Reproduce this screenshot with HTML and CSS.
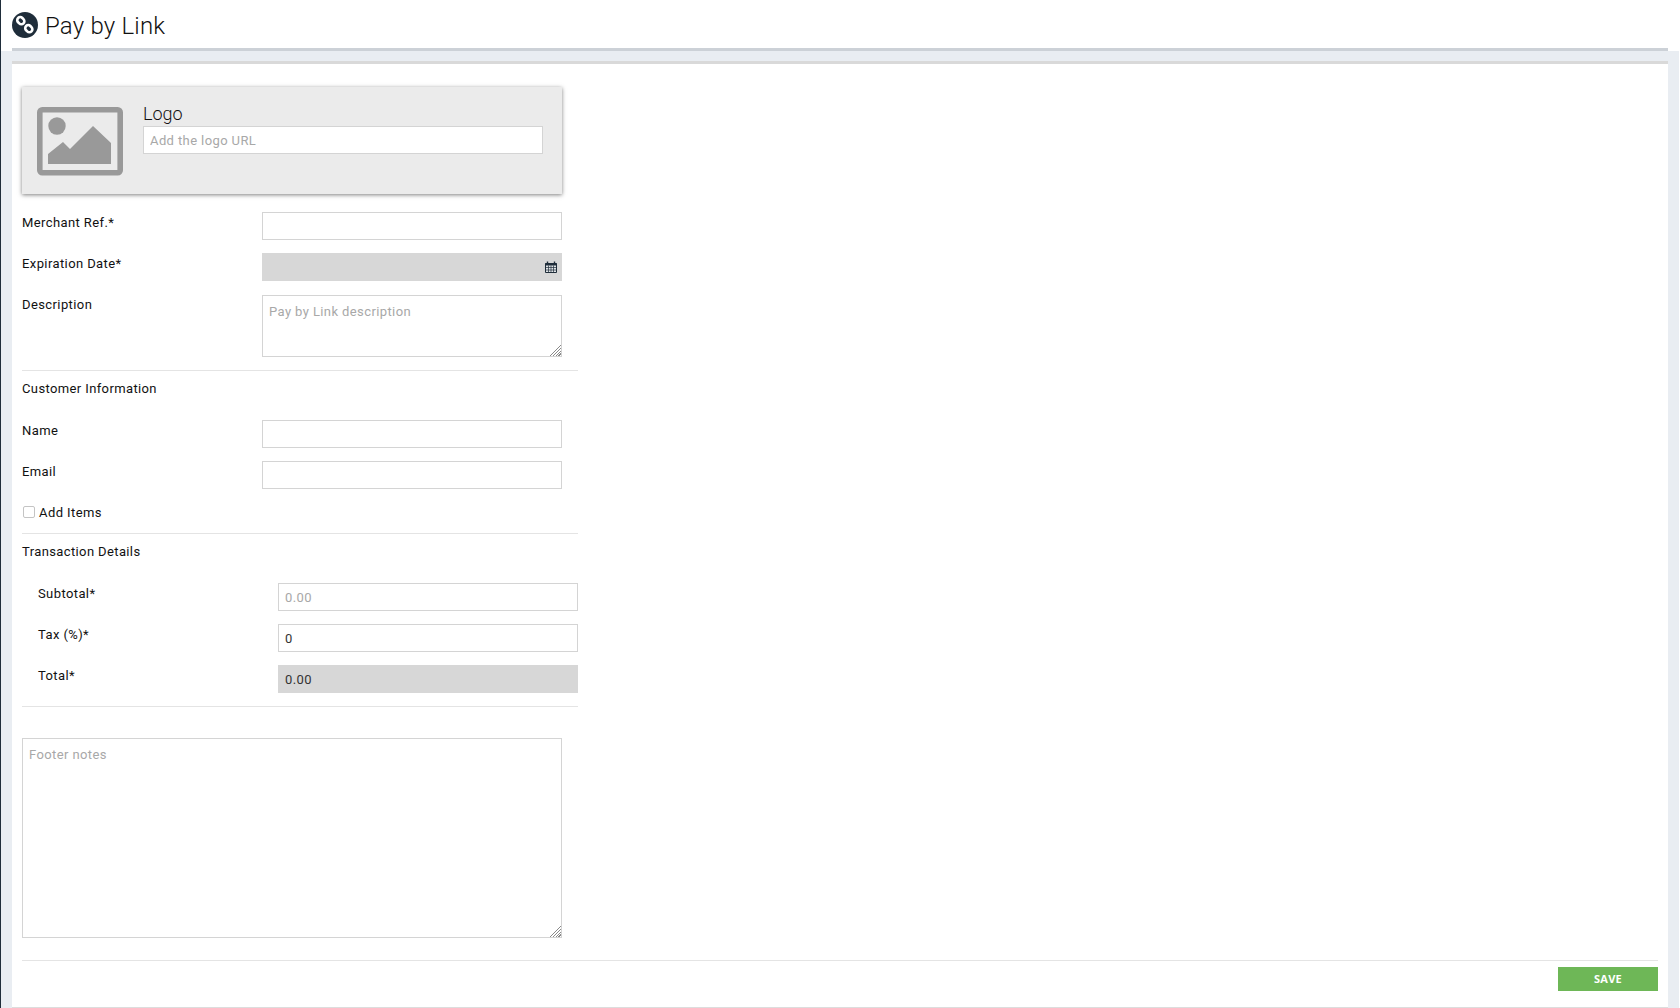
FILE: index.html
```html
<!DOCTYPE html>
<html lang="en">
<head>
<meta charset="utf-8">
<title>Pay by Link</title>
<link rel="stylesheet" href="styles.css">
</head>
<body>
<div class="app">
  <header class="page-header">
    <div class="title-row">
      <svg class="title-icon" viewBox="0 0 26 26" width="26" height="26" aria-hidden="true">
        <circle cx="13" cy="13" r="13" fill="#1f2d3a"/>
        <g fill="none" stroke="#fff" stroke-width="2.600">
          <rect x="5" y="5.700" width="7.600" height="6" rx="3" transform="rotate(45 8.800 8.700)"/>
          <rect x="13" y="13.700" width="7.600" height="6" rx="3" transform="rotate(45 16.800 16.700)"/>
        </g>
      </svg>
      <h1 class="title">Pay by Link</h1>
    </div>
  </header>
  <main class="panel">
    <section class="logo-card">
      <svg class="logo-icon" viewBox="0 0 86 69" width="86" height="69" aria-hidden="true">
        <rect x="2.800" y="2.800" width="80.400" height="63" rx="2.500" fill="none" stroke="#999" stroke-width="5.600"/>
        <circle cx="20" cy="19" r="8.700" fill="#999"/>
        <path d="M11 57V47L26 35L33 42L56 19L74 36V57Z" fill="#999"/>
      </svg>
      <div class="logo-fields">
        <div class="logo-title">Logo</div>
        <input class="field logo-input" type="text" placeholder="Add the logo URL">
      </div>
    </section>

    <div class="row"><label class="label">Merchant Ref.*</label><input class="field" type="text"></div>
    <div class="row row-date">
      <label class="label">Expiration Date*</label>
      <div class="date-field">
        <svg class="calendar" viewBox="0 0 12 12" width="12" height="12" aria-hidden="true">
          <path d="M.5 2.500h11v9H.5z" fill="#dfe3e6" stroke="#1f2d3a"/>
          <path d="M.5 2h11v2.500H.5z" fill="#1f2d3a"/>
          <path d="M2.500.5v2.500M9.500.5v2.500" stroke="#1f2d3a" stroke-width="1.400"/>
          <path d="M3.500 4.500v6.500M6 4.500v6.500M8.500 4.500v6.500M1 6.500h10M1 9h10" stroke="#1f2d3a" stroke-width=".7"/>
        </svg>
      </div>
    </div>
    <div class="row"><label class="label label-desc">Description</label><textarea class="field desc" placeholder="Pay by Link description"></textarea></div>

    <hr class="rule">
    <h2 class="section-title">Customer Information</h2>
    <div class="row"><label class="label">Name</label><input class="field" type="text"></div>
    <div class="row"><label class="label">Email</label><input class="field" type="text"></div>
    <label class="check-row"><input class="check" type="checkbox"><span>Add Items</span></label>

    <hr class="rule">
    <h2 class="section-title">Transaction Details</h2>
    <div class="totals">
      <div class="row"><label class="label">Subtotal*</label><input class="field" type="text" placeholder="0.00"></div>
      <div class="row"><label class="label">Tax (%)*</label><input class="field" type="text" value="0"></div>
      <div class="row"><label class="label">Total*</label><input class="field readonly" type="text" value="0.00" readonly></div>
    </div>
    <hr class="rule">

    <textarea class="field footer-notes" placeholder="Footer notes"></textarea>

    <hr class="rule rule-full">
    <div class="actions"><button class="save" type="button">SAVE</button></div>
  </main>
</div>
</body>
</html>
```

FILE: styles.css
```css
* { box-sizing: border-box; }
html, body { margin: 0; padding: 0; height: 100%; overflow: hidden; }
body {
  background: #fff;
  font-family: Roboto, "Liberation Sans", sans-serif;
  color: #111;
}
.app {
  width: 1679px;
  height: 1008px;
  background: #e9edf2;
  border-left: 1px solid #1f2d3a;
  padding: 0 11px;
  display: flex;
  flex-direction: column;
}
.page-header {
  margin: 0 -11px 10px;
  padding: 0 11px;
  background: #fff;
}
.title-row {
  height: 51px;
  display: flex;
  align-items: flex-start;
  gap: 7px;
  padding-top: 12px;
  border-bottom: 3px solid #ccd1d7;
}
.title-icon { flex: none; }
.title {
  margin: 0;
  font-size: 24px;
  line-height: 28px;
  font-weight: 300;
  letter-spacing: .2px;
  color: #111;
}
.panel {
  flex: 1;
  background: #fff;
  border-top: 3px solid #d9d9d9;
  margin-bottom: 1px;
  padding: 23px 10px 0;
  box-shadow: 0 1px 0 #ddd;
}
.logo-card {
  width: 540px;
  height: 107px;
  margin-bottom: 18px;
  padding: 20px 19px 0 15px;
  background: #ebebeb;
  box-shadow: 0 1px 4px rgba(0, 0, 0, .5);
  display: flex;
  gap: 20px;
}
.logo-icon { flex: none; }
.logo-fields { flex: 1; }
.logo-title {
  font-size: 18px;
  font-weight: 300;
  line-height: 19px;
  margin-top: -3px;
  margin-bottom: 3px;
  color: #111;
}
.logo-input { display: block; width: 100%; }
.row {
  display: grid;
  grid-template-columns: 240px 300px;
  margin-bottom: 13px;
}
.row-date { margin-bottom: 14px; }
.label {
  font-size: 13px;
  font-weight: 400;
  line-height: 22px;
  letter-spacing: .4px;
  color: #111;
}
.label-desc { margin-top: -1px; }
.field {
  width: 100%;
  height: 28px;
  padding: 0 6px;
  border: 1px solid #d4d4d4;
  border-radius: 0;
  background: #fff;
  font: 400 13px/20px Roboto, "Liberation Sans", sans-serif;
  letter-spacing: .4px;
  color: #333;
  outline: none;
}
.field::placeholder { color: #a8a8a8; opacity: 1; }
textarea.field::-webkit-resizer {
  background:
    linear-gradient(135deg, #fff 62%, transparent 62%),
    repeating-linear-gradient(135deg, #fff 0 1px, #8a8a8a 1px 2px);
}
.date-field {
  height: 28px;
  background: #d7d7d7;
  display: flex;
  align-items: center;
  justify-content: flex-end;
  padding-right: 5px;
}
.desc { height: 62px; padding-top: 6px; display: block; }
.rule {
  border: 0;
  border-top: 1px solid #e4e4e4;
  margin: 0;
  width: 556px;
}
.section-title {
  margin: 0;
  font-size: 13px;
  font-weight: 400;
  line-height: 20px;
  letter-spacing: .38px;
  color: #111;
  padding-top: 8px;
  padding-bottom: 21px;
}
.check-row {
  display: flex;
  align-items: center;
  height: 20px;
  margin-bottom: 11px;
  font-size: 13px;
  font-weight: 400;
  letter-spacing: .42px;
}
.check {
  appearance: none;
  width: 12px;
  height: 12px;
  margin: 0 4px 0 1px;
  flex: none;
  background: #fff;
  border: 1px solid #c4c4c4;
  border-radius: 2px;
}
.totals { padding-left: 16px; }
.readonly { background: #d7d7d7; border-color: #d7d7d7; }
.footer-notes { display: block; width: 540px; height: 200px; margin-top: 31px; padding-top: 6px; }
.rule-full { width: 100%; margin-top: 22px; }
.actions { display: flex; justify-content: flex-end; padding-top: 6px; }
.save {
  width: 100px;
  height: 24px;
  border: 0;
  background: #6eb757;
  color: #fff;
  font: 700 11px/24px "Open Sans", "Liberation Sans", sans-serif;
  letter-spacing: .3px;
  padding: 0;
}
```
